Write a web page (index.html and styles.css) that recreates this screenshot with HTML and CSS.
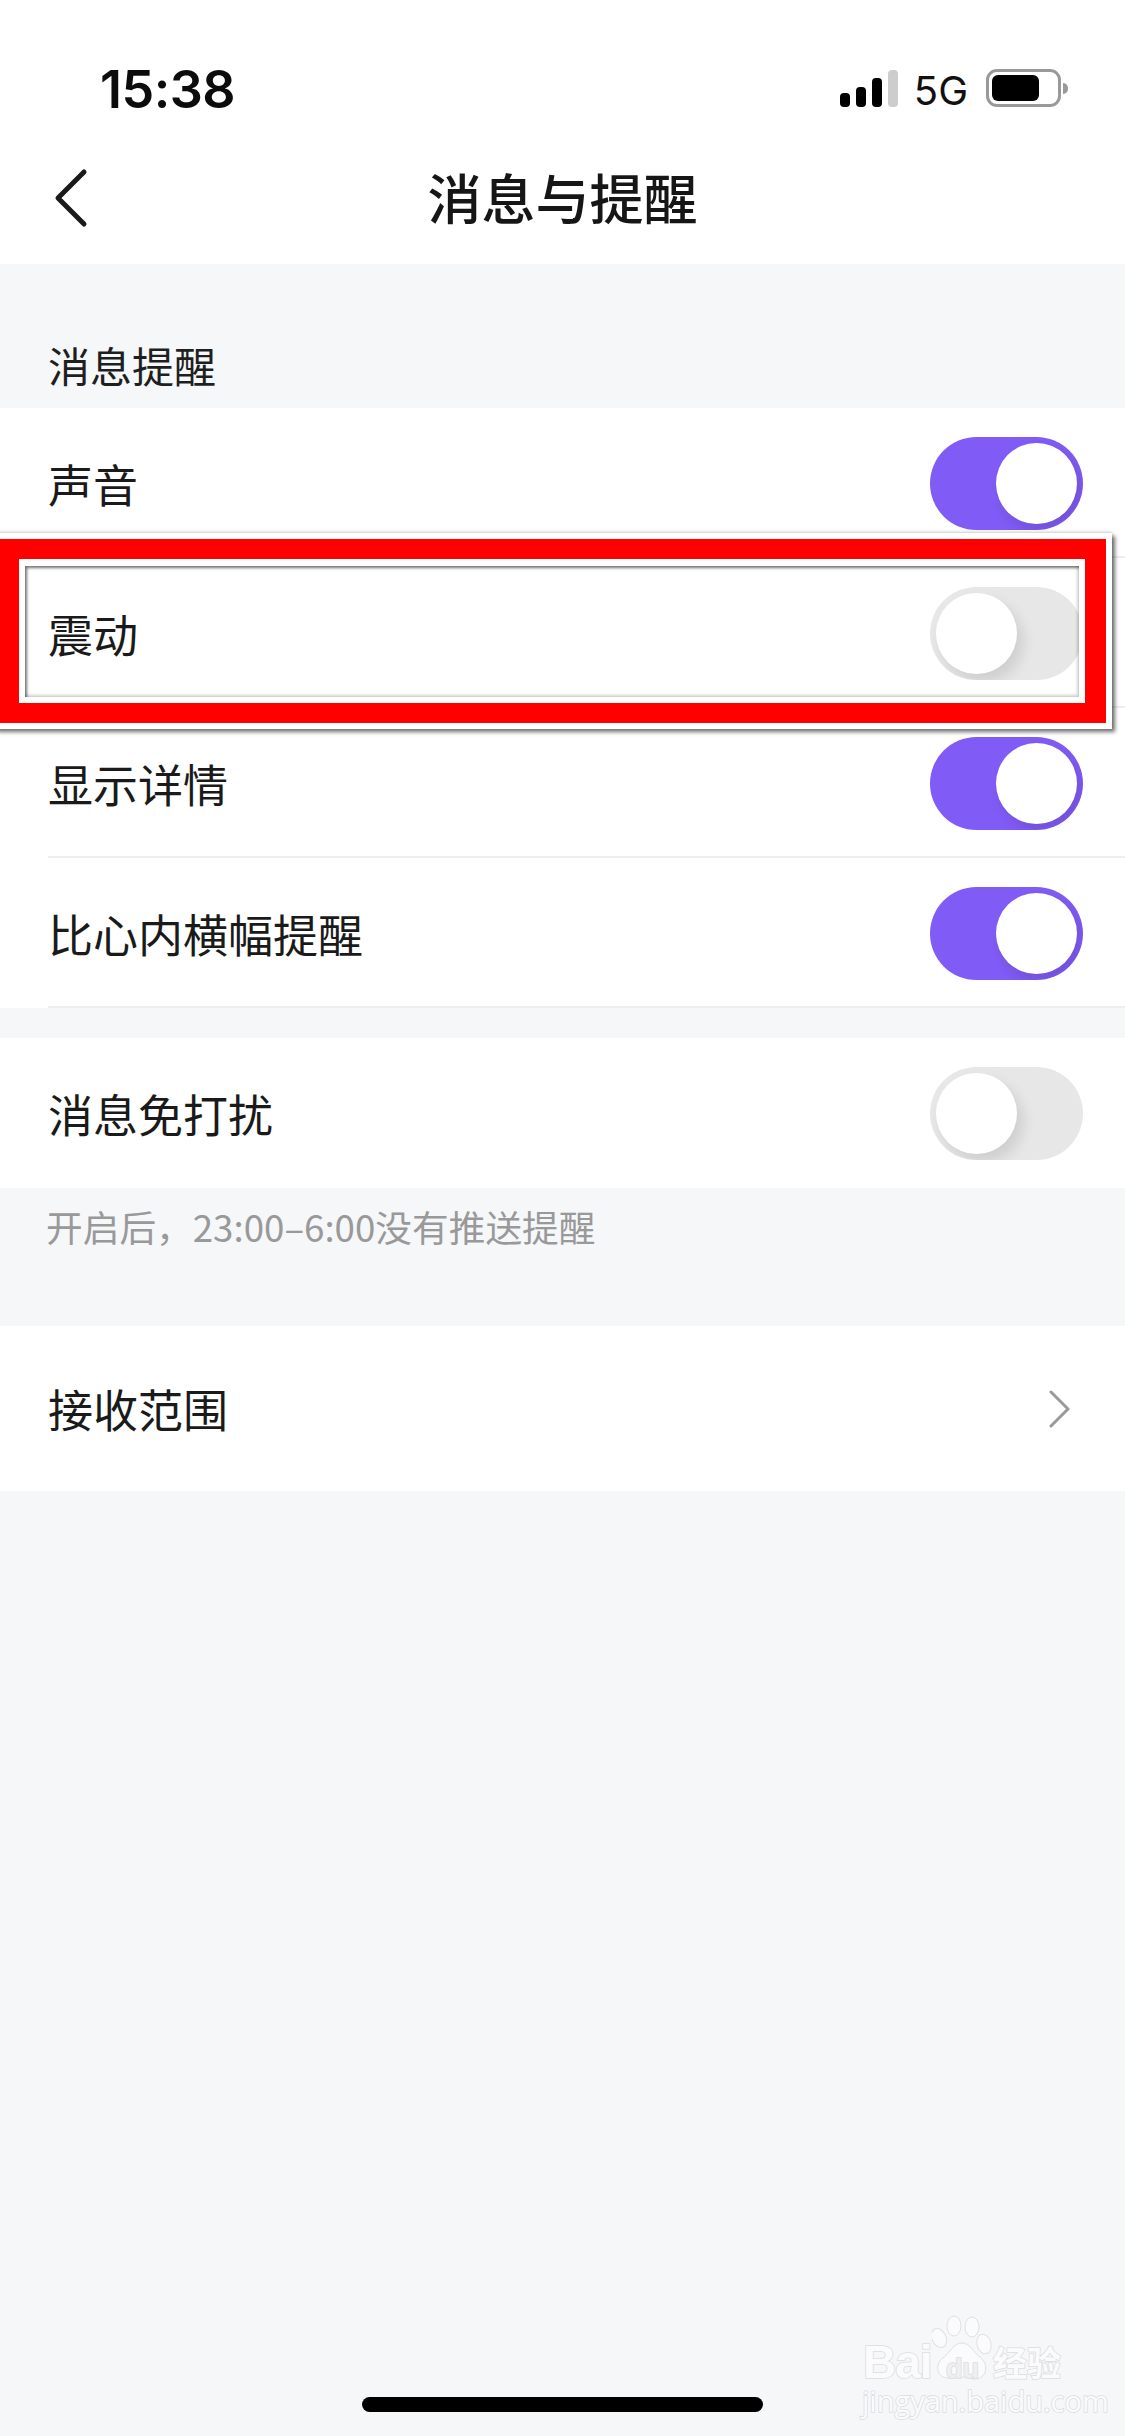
FILE: index.html
```html
<!DOCTYPE html>
<html lang="zh-CN">
<head>
<meta charset="utf-8">
<title>消息与提醒</title>
<link rel="stylesheet" href="styles.css">
</head>
<body>
<div class="page">
  <header class="top">
    <div class="status">
      <span class="time">15:38</span>
      <div class="status-right">
        <div class="signal"><i class="b1"></i><i class="b2"></i><i class="b3"></i><i class="b4"></i></div>
        <span class="net">5G</span>
        <div class="battery"><div class="battery-body"><div class="battery-fill"></div></div><div class="battery-nub"></div></div>
      </div>
    </div>
    <nav class="nav">
      <svg class="back" width="40" height="60" viewBox="0 0 40 60"><path d="M34 4 L8 30 L34 56" fill="none" stroke="#1a1a1a" stroke-width="5" stroke-linecap="round" stroke-linejoin="round"/></svg>
      <h1 class="title">消息与提醒</h1>
    </nav>
  </header>

  <div class="section-label">消息提醒</div>
  <section class="group">
    <div class="row"><span>声音</span><div class="switch on"><div class="knob"></div></div></div>
    <div class="row"><span>震动</span><div class="switch off"><div class="knob"></div></div></div>
    <div class="row"><span>显示详情</span><div class="switch on"><div class="knob"></div></div></div>
    <div class="row"><span>比心内横幅提醒</span><div class="switch on"><div class="knob"></div></div></div>
  </section>

  <section class="group group-second">
    <div class="row row-plain"><span>消息免打扰</span><div class="switch off"><div class="knob"></div></div></div>
  </section>
  <p class="note">开启后，23:00–6:00没有推送提醒</p>

  <section class="group group-third">
    <div class="row row-plain row-tall"><span>接收范围</span>
      <svg class="chev" width="24" height="38" viewBox="0 0 24 38"><path d="M3 2 L20 19 L3 36" fill="none" stroke="#999" stroke-width="3" stroke-linecap="round" stroke-linejoin="round"/></svg>
    </div>
  </section>

  <div class="home"></div>

  <div class="mark"><div class="mark-red"><div class="mark-white"><div class="mark-inner"></div></div></div></div>

  <div class="wm">
    <div class="wm-top">
      <span class="wm-bai">Bai</span>
      <svg class="wm-paw" width="62" height="66" viewBox="0 0 62 66">
        <g fill="#fbfbfc" stroke="#dfe0e3" stroke-width="1">
          <ellipse cx="7" cy="23" rx="7" ry="10" transform="rotate(-25 7 23)"/>
          <ellipse cx="22" cy="11" rx="7" ry="10"/>
          <ellipse cx="40" cy="12" rx="7" ry="10"/>
          <ellipse cx="52" cy="29" rx="7" ry="10" transform="rotate(-15 52 29)"/>
          <path d="M30 28 C38 28 41 37 48 42 C58 50 54 64 43 64 C38 64 35 62 30 62 C25 62 21 64 15 63 C5 62 2 50 11 43 C18 38 21 28 30 28 Z"/>
        </g>
      </svg>
      <span class="wm-du">du</span>
      <span class="wm-jy">经验</span>
    </div>
    <div class="wm-url">jingyan.baidu.com</div>
  </div>
</div>
</body>
</html>
```
FILE: styles.css
```css
* { box-sizing: border-box; }
html, body { margin: 0; padding: 0; }
body { font-family: "Noto Sans CJK SC", "Noto Sans", sans-serif; color: #1a1a1a; }
.page {
  position: relative;
  width: 1125px;
  height: 2436px;
  overflow: hidden;
  background: #f6f7f9;
  display: flex;
  flex-direction: column;
}
.top { background: #fff; height: 264px; flex: none; }
.status {
  height: 148px;
  padding: 59px 57px 0 100px;
  display: flex;
  justify-content: space-between;
  align-items: flex-start;
}
.time { font-family: Inter, "Liberation Sans", sans-serif; font-weight: 600; font-size: 52px; line-height: 62px; color: #0c0c0c; letter-spacing: -0.5px; }
.status-right { display: flex; align-items: flex-end; height: 50px; margin-top: -2px; }
.signal { display: flex; align-items: flex-end; gap: 6px; height: 38px; margin-right: 16px; }
.signal i { display: block; width: 10px; border-radius: 4px; background: #000; }
.signal .b1 { height: 14px; }
.signal .b2 { height: 20px; }
.signal .b3 { height: 29px; }
.signal .b4 { height: 37px; background: #cdcdcd; }
.net { font-family: Inter, "Liberation Sans", sans-serif; font-size: 40px; line-height: 48px; color: #111; margin-right: 18px; position: relative; top: 8px; }
.battery { display: flex; align-items: center; height: 38px; }
.battery-body { width: 75px; height: 38px; border: 3px solid #999; border-radius: 11px; padding: 3px; }
.battery-fill { width: 47px; height: 26px; background: #000; border-radius: 6px; }
.battery-nub { width: 5px; height: 11px; margin-left: 2px; background: #999; border-radius: 0 5px 5px 0; }
.nav { height: 116px; position: relative; display: flex; align-items: center; justify-content: center; }
.back { position: absolute; left: 50px; top: 20px; }
.title { margin: 0; font-size: 54px; font-weight: 500; line-height: 74px; position: relative; top: -9px; color: #161616; }
.section-label { height: 144px; padding: 72px 0 0 48px; font-size: 42px; line-height: 58px; color: #1f1f1f; flex: none; }
.group { background: #fff; flex: none; }
.row {
  height: 150px;
  margin-left: 48px;
  padding: 2px 42px 0 0;
  display: flex;
  align-items: center;
  justify-content: space-between;
  font-size: 45px;
  border-bottom: 2px solid #eee;
}
.row-plain { border-bottom: 0; padding-top: 0; }
.row-tall { height: 165px; padding-right: 53px; }
.group-second { margin-top: 30px; }
.switch { width: 153px; height: 93px; border-radius: 47px; padding: 6px; overflow: hidden; display: flex; }
.switch.on { background: #805bf5; justify-content: flex-end; }
.switch.off { background: #e7e7e7; justify-content: flex-start; }
.knob { width: 81px; height: 81px; border-radius: 50%; background: #fff; box-shadow: 6px 8px 14px rgba(0,0,0,.11); }
.note { margin: 0; height: 138px; padding: 13px 0 0 46px; font-size: 36.7px; line-height: 50px; color: #999; flex: none; }
.chev { flex: none; }
.home { margin-top: auto; margin-bottom: 24px; align-self: center; width: 401px; height: 15px; border-radius: 8px; background: #000; flex: none; }

.mark {
  position: absolute;
  left: -6px; top: 533px;
  width: 1118px; height: 196px;
  border: 6px solid #fff;
  box-shadow: 3px 3px 4px rgba(0,0,0,.55), 0 -1px 3px rgba(0,0,0,.18);
}
.mark-red { height: 100%; border: solid #f00; border-width: 20px 21px 20px 19px; }
.mark-white { height: 100%; border: 6px solid #fff; border-top-width: 7px; }
.mark-inner { height: 100%; box-shadow: inset 2px 2px 3px rgba(0,0,0,.55), inset -2px -2px 3px rgba(0,0,0,.18); }

.wm { position: absolute; left: 862px; top: 2315px; width: 204px; color: #fbfbfc; font-family: "Liberation Sans", sans-serif; }
.wm-top { position: relative; height: 70px; }
.wm-bai, .wm-du, .wm-jy, .wm-url { -webkit-text-stroke: 1.6px #dcdde0; paint-order: stroke fill; }
.wm-bai, .wm-du, .wm-jy { position: absolute; font-weight: 700; }
.wm-bai { left: 1px; top: 26px; font-size: 46px; line-height: 42px; letter-spacing: -1px; }
.wm-paw { position: absolute; left: 70px; top: 0; }
.wm-du { left: 84px; top: 42px; font-size: 27px; line-height: 24px; color: #eeeff1; }
.wm-jy { left: 131px; top: 30px; font-size: 34px; line-height: 34px; font-family: "Noto Sans CJK SC", sans-serif; }
.wm-url { font-size: 29px; line-height: 28px; font-family: "Open Sans", sans-serif; margin-top: 2px; white-space: nowrap; }
```
